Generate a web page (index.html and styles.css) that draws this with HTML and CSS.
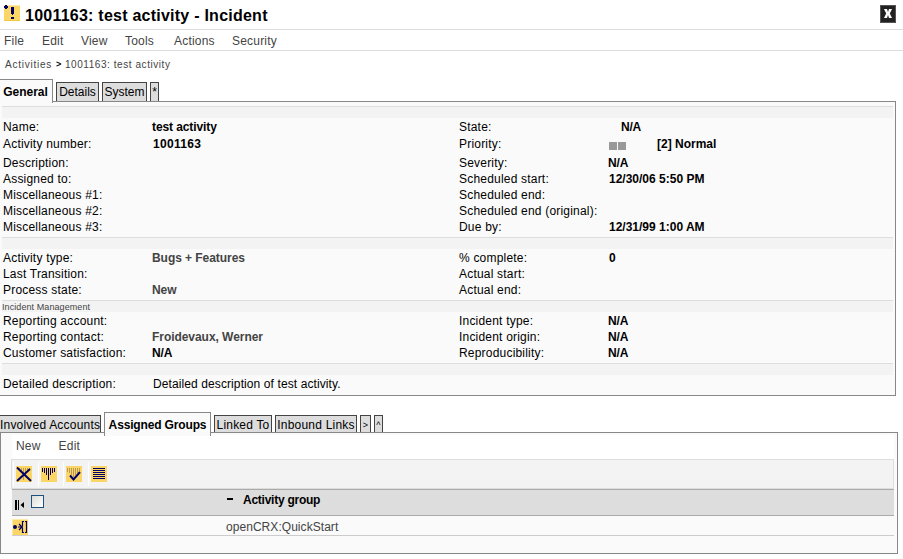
FILE: index.html
```html
<!DOCTYPE html>
<html lang="en">
<head>
<meta charset="utf-8">
<title>1001163: test activity - Incident</title>
<link rel="stylesheet" href="styles.css">
</head>
<body>
<header class="title">
  <svg class="title-icon" width="16" height="16" viewBox="0 0 16 16" shape-rendering="crispEdges"><rect width="16" height="16" fill="#fbd667"/><path d="M0 0h16v1H0z" fill="#fde9a8"/><path d="M0 15h16v1H0z" fill="#f5c842"/><path d="M0 1h4v2H0zM1 0h2v4H1zM7 2h3v7H7zM8 9h1v1H8zM7 12h3v2H7z" fill="#000066"/></svg>
  <h1>1001163: test activity - Incident</h1>
  <button class="close" aria-label="Close"><svg width="14" height="16" viewBox="0 0 14 16"><path d="M3 3h3l1 3 1-3h3L8.800 7.500 11 12H8L7 9l-1 3H3l2.200-4.500z" fill="#fff"/></svg></button>
</header>
<nav class="menu"><span class="m-file">File</span><span class="m-edit">Edit</span><span class="m-view">View</span><span class="m-tools">Tools</span><span class="m-actions">Actions</span><span>Security</span></nav>
<div class="crumbs"><span class="root">Activities</span><b>&gt;</b><span>1001163: test activity</span></div>

<div class="tabs main-tabs"><span class="tab active w-general">General</span><span class="tab w-details">Details</span><span class="tab w-system">System</span><span class="tab w-star">*</span></div>
<main class="panel">
  <section>
    <div class="band"></div>
    <div class="row"><label>Name:</label><b class="n">test activity</b><label>State:</label><b class="inset">N/A</b></div>
    <div class="row tall"><label>Activity number:</label><b class="number">1001163</b><label>Priority:</label><b class="priority"><i></i><i></i><span>[2] Normal</span></b></div>
    <div class="row"><label>Description:</label><b></b><label>Severity:</label><b class="n">N/A</b></div>
    <div class="row"><label>Assigned to:</label><b></b><label>Scheduled start:</label><b>12/30/06 5:50 PM</b></div>
    <div class="row"><label>Miscellaneous #1:</label><b></b><label>Scheduled end:</label><b></b></div>
    <div class="row"><label>Miscellaneous #2:</label><b></b><label>Scheduled end (original):</label><b></b></div>
    <div class="row"><label>Miscellaneous #3:</label><b></b><label>Due by:</label><b>12/31/99 1:00 AM</b></div>
  </section>
  <section>
    <div class="band"></div>
    <div class="row"><label>Activity type:</label><b class="link">Bugs + Features</b><label>% complete:</label><b>0</b></div>
    <div class="row"><label>Last Transition:</label><b></b><label>Actual start:</label><b></b></div>
    <div class="row"><label>Process state:</label><b class="link">New</b><label>Actual end:</label><b></b></div>
  </section>
  <section>
    <div class="band">Incident Management</div>
    <div class="row"><label>Reporting account:</label><b></b><label>Incident type:</label><b class="n">N/A</b></div>
    <div class="row"><label>Reporting contact:</label><b class="link">Froidevaux, Werner</b><label>Incident origin:</label><b class="n">N/A</b></div>
    <div class="row"><label>Customer satisfaction:</label><b class="n">N/A</b><label>Reproducibility:</label><b class="n">N/A</b></div>
  </section>
  <section>
    <div class="band"></div>
    <div class="row"><label>Detailed description:</label><span class="text">Detailed description of test activity.</span></div>
  </section>
</main>

<div class="tabs sub-tabs"><span class="tab w-involved">Involved Accounts</span><span class="tab active w-assigned">Assigned Groups</span><span class="tab w-linked">Linked To</span><span class="tab w-inbound">Inbound Links</span><span class="tab w-next sym">&gt;</span><span class="tab w-up sym">^</span></div>
<div class="subpanel">
  <nav class="submenu"><span>New</span><span>Edit</span></nav>
  <div class="toolbar">
    <span><svg width="16" height="16" viewBox="0 0 16 16"><rect width="16" height="16" fill="#fbd667"/><path d="M3.500 2v3M5.500 2v5M7.500 2v5M9.500 2v5M11.500 2v4M13.500 2v2M7.500 10v4" stroke="#b99a55"/><path d="M1 1.500L15 15M14 3L1 15" stroke="#000066" stroke-width="2"/></svg></span>
    <span><svg width="16" height="16" viewBox="0 0 16 16"><rect width="16" height="16" fill="#fbd667"/><path d="M1.500 2v4M3.500 2v5M5.500 2v7M7.500 2v12M9.500 2v7M11.500 2v5M13.500 2v4" stroke="#000066"/></svg></span>
    <span><svg width="16" height="16" viewBox="0 0 16 16"><rect width="16" height="16" fill="#fbd667"/><path d="M1.500 2v4M3.500 2v5M5.500 2v7M7.500 2v9M9.500 2v7M11.500 2v5M13.500 2v3" stroke="#b99a55"/><path d="M4 9.500l3.500 4L14 6" fill="none" stroke="#000066" stroke-width="2"/></svg></span>
    <span><svg width="16" height="16" viewBox="0 0 16 16"><rect width="16" height="16" fill="#fbd667"/><path d="M2 2.500h12M2 4.500h12M2 6.500h12M2 8.500h12M2 10.500h12M2 12.500h12" stroke="#000066"/></svg></span>
  </div>
  <div class="grid-head">
    <svg class="marker" width="10" height="10" viewBox="0 0 10 10"><path d="M0 0h2v10H0zM3 0h1v10H3zM9 2v6L5.500 5z"/></svg>
    <span class="check"></span><b class="dash"></b><b class="col">Activity group</b>
  </div>
  <div class="grid-row">
    <svg width="16" height="16" viewBox="0 0 16 16"><rect width="16" height="16" fill="#fbd667"/><path d="M0 0h16v1H0zM0 0h1v16H0z" fill="#fde9a8"/><circle cx="3" cy="8" r="2" fill="#000066"/><path d="M6 8h4M7 5l3 3-3 3M12 2.500H10.500V7L9.500 8l1 1v4.500H12M13 2.500h1.500v11H13" fill="none" stroke="#000066" stroke-width="1.200"/></svg>
    <span>openCRX:QuickStart</span>
  </div>
</div>
</body>
</html>
```

FILE: styles.css
```css
* { box-sizing: border-box; }
body { margin: 0; width: 903px; height: 559px; overflow: hidden; background: #fff; color: #000; font: 12px/16px "Liberation Sans", Arial, sans-serif; white-space: nowrap; }
svg { display: block; flex: none; }
.title { display: flex; height: 30px; border-bottom: 1px solid #ddd; padding: 5px 7px 0 4px; }
h1 { margin: 0 auto 0 5px; font-size: 16px; line-height: 21px; letter-spacing: .24px; }
.close { width: 16px; height: 18px; padding: 0; border: 1px solid #555; background: #222; }
.menu { display: flex; height: 21px; border-bottom: 1px solid #ddd; padding: 3px 0 0 4px; color: #444; letter-spacing: .2px; }
.m-file { width: 38px; } .m-edit { width: 39px; } .m-view { width: 44px; } .m-tools { width: 49px; } .m-actions { width: 58px; }
.crumbs { display: flex; height: 28px; padding: 6px 0 0 5px; color: #444; font-size: 10px; letter-spacing: .56px; }
.crumbs .root { width: 51px; letter-spacing: .75px; }
.crumbs b { width: 9px; margin-top: -1px; color: #000; font-size: 9px; }
.tabs { display: flex; align-items: flex-end; position: relative; gap: 3px; }
.tab { flex: none; height: 19px; border: 1px solid #444; border-bottom: 0; background: #ddd; line-height: 18px; text-align: center; }
.tab.active { height: 24px; margin-bottom: -2px; border-color: #888; background: #fafafa; font-weight: bold; line-height: 24px; }
.main-tabs { height: 22px; }
.w-general { width: 53px; border-left: 0; text-indent: -1px; }
.w-details { width: 43px; } .w-system { width: 45px; } .w-star { width: 9px; }
.panel { width: 896px; height: 295px; border: 1px solid #888; border-left: 0; background: #fafafa; padding: 4px 2px 0; }
section { border-top: 1px solid #ddd; padding-bottom: 2px; }
.band { height: 11px; margin-bottom: 1px; background: #f3f3f3; color: #444; font-size: 9px; line-height: 12px; letter-spacing: .08px; }
.row { display: grid; grid-template-columns: 150px 306px 150px auto; height: 16px; padding-left: 1px; }
.row.tall { height: 20px; padding-top: 1px; }
.row > * { line-height: 16px; }
label { letter-spacing: .2px; }
.text { letter-spacing: .1px; }
.n, .link { margin-left: -1px; }
.n { letter-spacing: -.1px; }
.number { letter-spacing: .3px; }
.link { color: #444; letter-spacing: -.05px; }
.inset { padding-left: 12px; letter-spacing: -.2px; }
.priority { display: flex; }
.priority i { width: 8px; height: 8px; margin: 6px 1px 0 0; background: #999; }
.priority span { margin-left: 30px; }
.sub-tabs { height: 17px; margin-top: 19px; align-items: flex-start; }
.sub-tabs .tab { height: 17px; letter-spacing: .2px; }
.sub-tabs .tab.active { height: 24px; margin-top: -3px; line-height: 25px; letter-spacing: -.15px; }
.w-involved { width: 101px; border-left: 0; }
.w-assigned { width: 107px; }
.w-linked { width: 58px; } .w-inbound { width: 82px; } .w-next { width: 11px; } .w-up { width: 9px; }
.tab.sym { font-size: 9px; }
.subpanel { width: 898px; height: 122px; border: 1px solid #888; background: #fafafa; padding: 2px 3px 0 10px; }
.submenu { display: flex; gap: 18px; height: 24px; margin-left: 1px; padding: 3px 0 0 4px; background: #fff; color: #444; letter-spacing: .2px; }
.toolbar { display: flex; height: 30px; border: 1px solid #ddd; background: #f3f3f3; padding: 2px 0 0 1px; }
.toolbar span { width: 25px; height: 24px; border-left: 1px solid #fff; padding: 4px 2px; }
.grid-head { display: flex; height: 27px; margin-left: 1px; border: solid #aaa; border-width: 1px 0; background: #ddd; }
.marker { margin: 10px 6px 0 3px; }
.check { width: 13px; height: 13px; margin-top: 5px; border: 1px solid #1c5180; background: linear-gradient(135deg, #dcdcd7, #fff); }
.dash { width: 6px; height: 2px; margin: 8px 10px 0 183px; background: #000; }
.col { line-height: 20px; letter-spacing: -.25px; }
.grid-row { display: flex; height: 20px; margin-left: 1px; border-bottom: 1px solid #ccc; padding-top: 3px; color: #444; }
.grid-row span { margin-left: 198px; letter-spacing: .05px; }
```
